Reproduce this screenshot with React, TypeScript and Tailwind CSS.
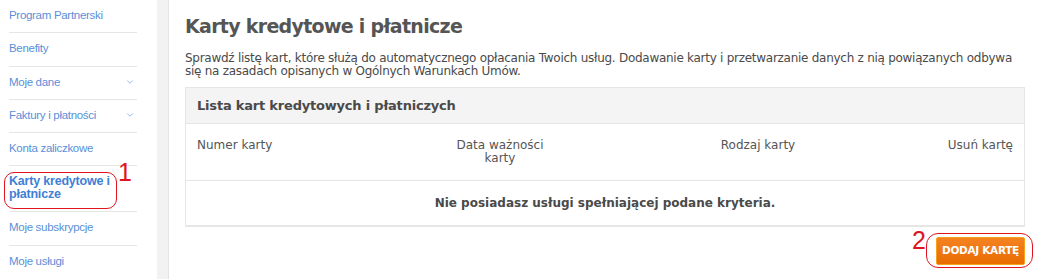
import { ChevronDown } from 'lucide-react'

type NavItem = { label: string; expandable?: boolean; active?: boolean }

const NAV: NavItem[] = [
  { label: 'Program Partnerski' },
  { label: 'Benefity' },
  { label: 'Moje dane', expandable: true },
  { label: 'Faktury i płatności', expandable: true },
  { label: 'Konta zaliczkowe' },
  { label: 'Karty kredytowe i płatnicze', active: true },
  { label: 'Moje subskrypcje' },
  { label: 'Moje usługi' },
]

function Sidebar() {
  return (
    <aside className="flex w-[169px] shrink-0">
      <nav className="flex w-[157px] flex-col pl-[9px] pr-[20px] pt-[0px] font-['Liberation_Sans',Arial,sans-serif] text-[11.5px] tracking-[-0.3px] text-[#5a8fd8]">
        {NAV.map((item, i) => (
          <div
            key={item.label}
            className={
              'relative flex items-center justify-between border-[#e6e6e6] ' +
              (i < NAV.length - 1 ? 'border-b ' : '') +
              (item.active ? 'h-[47px] pb-[1px]' : 'h-[34px] pb-[1px]')
            }
          >
            {item.active ? (
              <>
                <span className="w-[110px] text-[12.5px] font-bold leading-[13px] tracking-[-0.2px] text-[#3f7fd6]">{item.label}</span>
                <span className="absolute left-[-5px] top-[6px] h-[37px] w-[113px] rounded-[10px] border-[1.5px] border-[#e0141e]" />
                <span className="absolute left-[109px] top-[-6px] font-['Liberation_Sans',Arial,sans-serif] text-[25px] leading-none text-[#e0141e]">1</span>
              </>
            ) : (
              <span>{item.label}</span>
            )}
            {item.expandable && <ChevronDown size={10} strokeWidth={1.5} className="mr-[2px] text-[#5a8fd8]" />}
          </div>
        ))}
      </nav>
      <div className="w-[12px] border-r border-[#e4e4e4] bg-[#f2f2f2]" />
    </aside>
  )
}

function CardsTable() {
  return (
    <div className="border border-b-2 border-[#e6e6e6] text-[#555]">
      <div className="flex h-[36px] items-center border-b border-[#e6e6e6] bg-[#f4f4f4] px-[11px]">
        <h2 className="text-[13px] font-bold tracking-[-0.2px] text-[#4a4a4a]">Lista kart kredytowych i płatniczych</h2>
      </div>
      <div className="grid h-[57px] grid-cols-[206px_194px_322px_1fr] border-b border-[#e6e6e6] px-[11px] pt-[15px] text-[12px] leading-[13px]">
        <span>Numer karty</span>
        <span className="mx-auto w-[100px] text-center">Data ważności karty</span>
        <span className="text-center">Rodzaj karty</span>
        <span className="text-right">Usuń kartę</span>
      </div>
      <p className="flex h-[44px] items-center justify-center text-[12px] font-bold text-[#4a4a4a]">
        Nie posiadasz usługi spełniającej podane kryteria.
      </p>
    </div>
  )
}

export default function App() {
  return (
    <div className="flex h-[279px] w-[1039px] overflow-hidden bg-white">
      <Sidebar />
      <main className="flex w-[856px] flex-col pl-[16px] pt-[12px] font-['DejaVu_Sans',Verdana,sans-serif] text-[#4a4a4a]">
        <h1 className="text-[19px] font-bold leading-[28px] tracking-[-0.7px] text-[#555]">Karty kredytowe i płatnicze</h1>
        <p className="mt-[12px] w-[840px] text-[12px] leading-[13px] tracking-[-0.27px]">
          Sprawdź listę kart, które służą do automatycznego opłacania Twoich usług. Dodawanie karty i przetwarzanie
          danych z nią powiązanych odbywa się na zasadach opisanych w Ogólnych Warunkach Umów.
        </p>
        <div className="mt-[9px]">
          <CardsTable />
        </div>
        <div className="relative mt-[10px] flex justify-end">
          <button
            type="button"
            className="h-[28px] w-[89px] rounded-[2px] border border-[#f6a21c] bg-gradient-to-b from-[#f58220] to-[#e86c00] text-[10.5px] font-bold tracking-[-0.3px] text-white"
          >
            DODAJ KARTĘ
          </button>
          <span className="absolute right-[-8px] top-[-4px] h-[35px] w-[107px] rounded-[12px] border-[1.5px] border-[#e0141e]" />
          <span className="absolute right-[99px] top-[-9px] font-['Liberation_Sans',Arial,sans-serif] text-[25px] leading-none text-[#e0141e]">2</span>
        </div>
      </main>
    </div>
  )
}
